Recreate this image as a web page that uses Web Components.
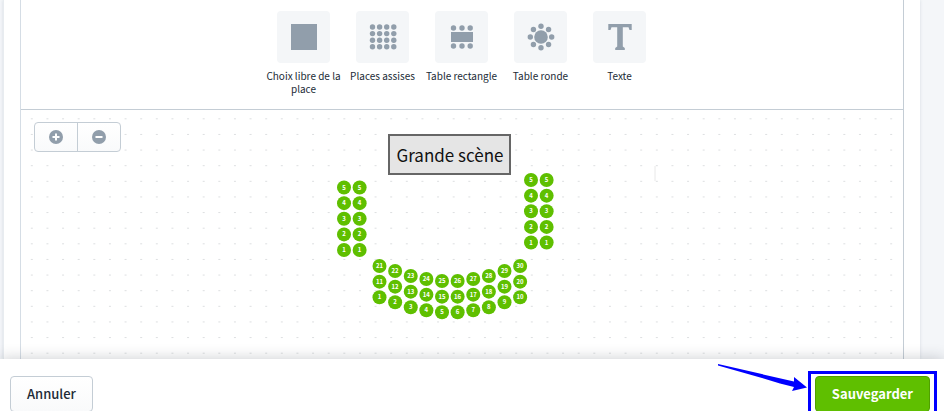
<!DOCTYPE html>
<html lang="fr">
<head>
<meta charset="utf-8">
<title>Plan de salle</title>
<style>
  html, body { margin: 0; height: 100%; }
  body { font-family: "Noto Sans CJK SC", "Noto Sans", sans-serif; color: #212b36; background: #f4f6f9; overflow: hidden; }
</style>
</head>
<body>
<plan-page>
  <plan-editor>
    <tool-bar slot="tools">
      <tool-item icon="area">Choix libre de la place</tool-item>
      <tool-item icon="seats">Places assises</tool-item>
      <tool-item icon="rect">Table rectangle</tool-item>
      <tool-item icon="round">Table ronde</tool-item>
      <tool-item icon="text">Texte</tool-item>
    </tool-bar>
    <seat-map></seat-map>
    <zoom-control slot="zoom"></zoom-control>
  </plan-editor>
  <action-bar slot="actions">
    <action-button>Annuler</action-button>
    <callout-frame slot="end"><action-button primary>Sauvegarder</action-button></callout-frame>
  </action-bar>
</plan-page>
<script>
const define = (name, html, setup) => customElements.define(name, class extends HTMLElement {
  constructor() {
    super();
    this.attachShadow({ mode: 'open' });
  }
  connectedCallback() {
    this.shadowRoot.innerHTML = html;
    if (setup) setup(this, this.shadowRoot);
  }
});

define('plan-page', `
  <style>
    :host { display: flex; flex-direction: column; height: 100vh; }
    main { flex: 1; min-height: 0; display: flex; margin: 0 24px 0 3px; padding: 0 16px; background: #fff;
           border-left: 1px solid #e8ecf0; box-shadow: 0 0 3px #d5dbe1; }
    ::slotted(plan-editor) { flex: 1; }
  </style>
  <main><slot></slot></main>
  <slot name="actions"></slot>`);

define('plan-editor', `
  <style>
    :host { display: flex; flex-direction: column; min-width: 0; border: solid #c4cdd5; border-width: 0 1px; border-left-color: #d5dde5; }
    .tools { height: 110px; box-sizing: border-box; border-bottom: 1px solid #c4cdd5; flex: none; }
    .canvas { flex: 1; min-height: 0; display: grid; position: relative; overflow: hidden; }
    ::slotted(zoom-control) { position: absolute; left: 13px; top: 12px; }
  </style>
  <div class="tools"><slot name="tools"></slot></div>
  <div class="canvas"><slot></slot><slot name="zoom"></slot></div>`);

define('tool-bar', `
  <style>:host { display: flex; justify-content: center; padding: 11px 1px 0 0; }</style>
  <slot></slot>`);

const icons = {
  area: '<rect x="1" y="1" width="26" height="26"/>',
  seats: [0,1,2,3].map(r => [0,1,2,3].map(c => `<circle cx="${3.5 + c*7.1}" cy="${4 + r*6.6}" r="2.7"/>`).join('')).join(''),
  rect: '<rect x="3" y="9" width="22" height="10"/>' + [5.5,14,22.2].map(x => `<circle cx="${x}" cy="5" r="2.7"/><circle cx="${x}" cy="23" r="2.7"/>`).join(''),
  round: '<circle cx="14" cy="14" r="6.8"/>' + [0,1,2,3,4,5,6,7].map(i => `<circle cx="${14 + 10.7*Math.cos(i*Math.PI/4)}" cy="${14 + 10.7*Math.sin(i*Math.PI/4)}" r="2.7"/>`).join(''),
  text: '<path d="M2.300 1H25.700V7H23.500L22.500 4.200H16.800V23.500L18.800 25V27H9.200V25L11.200 23.500V4.200H5.500L4.500 7H2.300z"/>'
};

define('tool-item', `
  <style>
    :host { display: block; width: 79px; }
    button { all: unset; width: 100%; display: flex; flex-direction: column; align-items: center; gap: 6px; cursor: pointer;
             font-size: 10px; line-height: 13px; text-align: center; }
    .tile { width: 53px; height: 52px; border-radius: 4px; background: #f4f6f8; display: grid; place-items: center; }
    svg { width: 28px; height: 28px; fill: #919eab; }
  </style>
  <button type="button"><span class="tile"></span><span><slot></slot></span></button>`,
  (el, root) => {
    root.querySelector('.tile').innerHTML = `<svg viewBox="0 0 28 28" aria-hidden="true">${icons[el.getAttribute('icon')]}</svg>`;
  });

define('zoom-control', `
  <style>
    :host { display: flex; box-sizing: border-box; border: 1px solid #c4cdd5; border-radius: 4px; overflow: hidden;
            background: linear-gradient(#fff, #f9fafb); }
    button { all: unset; width: 42px; height: 28px; display: grid; place-items: center; cursor: pointer; }
    button + button { border-left: 1px solid #c4cdd5; }
    svg { width: 14px; height: 14px; fill: #919eab; stroke: #fff; stroke-width: 2; }
    circle { stroke: none; }
  </style>
  <button type="button" aria-label="Zoom avant"><svg viewBox="0 0 14 14"><circle cx="7" cy="7" r="7"/><path d="M3.5 7h7M7 3.5v7"/></svg></button>
  <button type="button" aria-label="Zoom arrière"><svg viewBox="0 0 14 14"><circle cx="7" cy="7" r="7"/><path d="M3.5 7h7"/></svg></button>`);

define('seat-map', `
  <style>
    :host { display: block; min-height: 0; }
    svg { display: block; width: 100%; height: 100%; }
    text { text-anchor: middle; font-family: inherit; }
    .seat circle { fill: #5fbf00; }
    .seat text { fill: #fff; font-size: 6px; font-weight: 700; }
    .stage rect { fill: #e4e4e4; fill-opacity: .97; stroke: #666; stroke-width: 2; }
    .stage text { font-size: 17px; fill: #111; }
  </style>
  <svg role="img" aria-label="Plan de salle">
    <defs><pattern id="dots" x="3" y="1" width="125" height="125" patternUnits="userSpaceOnUse"></pattern></defs>
    <rect width="100%" height="100%" fill="url(#dots)"/>
    <g class="stage"><rect x="368" y="25" width="121" height="39"/><text x="429" y="52">Grande scène</text></g>
    <path d="M634 56v15" stroke="#e8e8e8"/>
    <g class="seats"></g>
  </svg>`,
  (el, root) => {
    const pitch = 125 / 8;
    let dots = '';
    for (let r = 0; r < 8; r++) for (let c = 0; c < 8; c++)
      dots += `<rect x="${(c + .5) * pitch - 1}" y="${(r + .5) * pitch - .5}" width="2" height="1" fill="#dddfe1"/>`;
    root.querySelector('pattern').innerHTML = dots;
    let seats = '';
    const seat = (x, y, n) => seats += `<g class="seat"><circle cx="${x}" cy="${y}" r="7"/><text x="${x}" y="${y + 2}">${n}</text></g>`;
    for (const [x, y] of [[323, 77.5], [510, 70]])
      for (let r = 0; r < 5; r++) for (let c = 0; c < 2; c++) seat(x + c * pitch, y + r * pitch, 5 - r);
    const arc = [156, 161, 166, 169, 171, 171, 169, 166, 161, 156];
    for (let r = 0; r < 3; r++) arc.forEach((y, c) => seat(358.5 + c * pitch, y + r * pitch, (2 - r) * 10 + c + 1));
    root.querySelector('.seats').innerHTML = seats;
  });

define('action-bar', `
  <style>
    :host { display: flex; flex: none; justify-content: space-between; align-items: flex-start; height: 35px; padding: 17px 14px 0 10px;
            background: #fff; position: relative; box-shadow: 0 0 14px rgba(33,43,54,.24); }
  </style>
  <slot></slot><slot name="end"></slot>`);

define('action-button', `
  <style>
    :host { display: block; }
    button { height: 36px; box-sizing: border-box; padding: 0 16px; border: 1px solid #c4cdd5; border-radius: 4px; cursor: pointer;
             background: linear-gradient(#fff, #f9fafb); color: #212b36; font-family: inherit; font-size: 13px; font-weight: 500; line-height: 20px; }
    :host([primary]) button { background: #5fbf00; border-color: #50a000; color: #fff; font-weight: 700; }
  </style>
  <button type="button"><slot></slot></button>`);

define('callout-frame', `
  <style>
    :host { display: block; position: relative; }
    .frame { position: absolute; inset: -5px -7px; border: 3px solid #00f; pointer-events: none; }
    svg { position: absolute; right: 100%; top: -12px; margin-right: 8px; width: 90px; height: 30px; fill: #00f; pointer-events: none; }
  </style>
  <slot></slot><span class="frame"></span>
  <svg viewBox="0 0 90 30" aria-hidden="true"><path d="M1 0L77 17.500L77 13L90 23.500L75 27L77 23L63 19.500L45 14L1 1.500Z"/></svg>`);
</script>
</body>
</html>
